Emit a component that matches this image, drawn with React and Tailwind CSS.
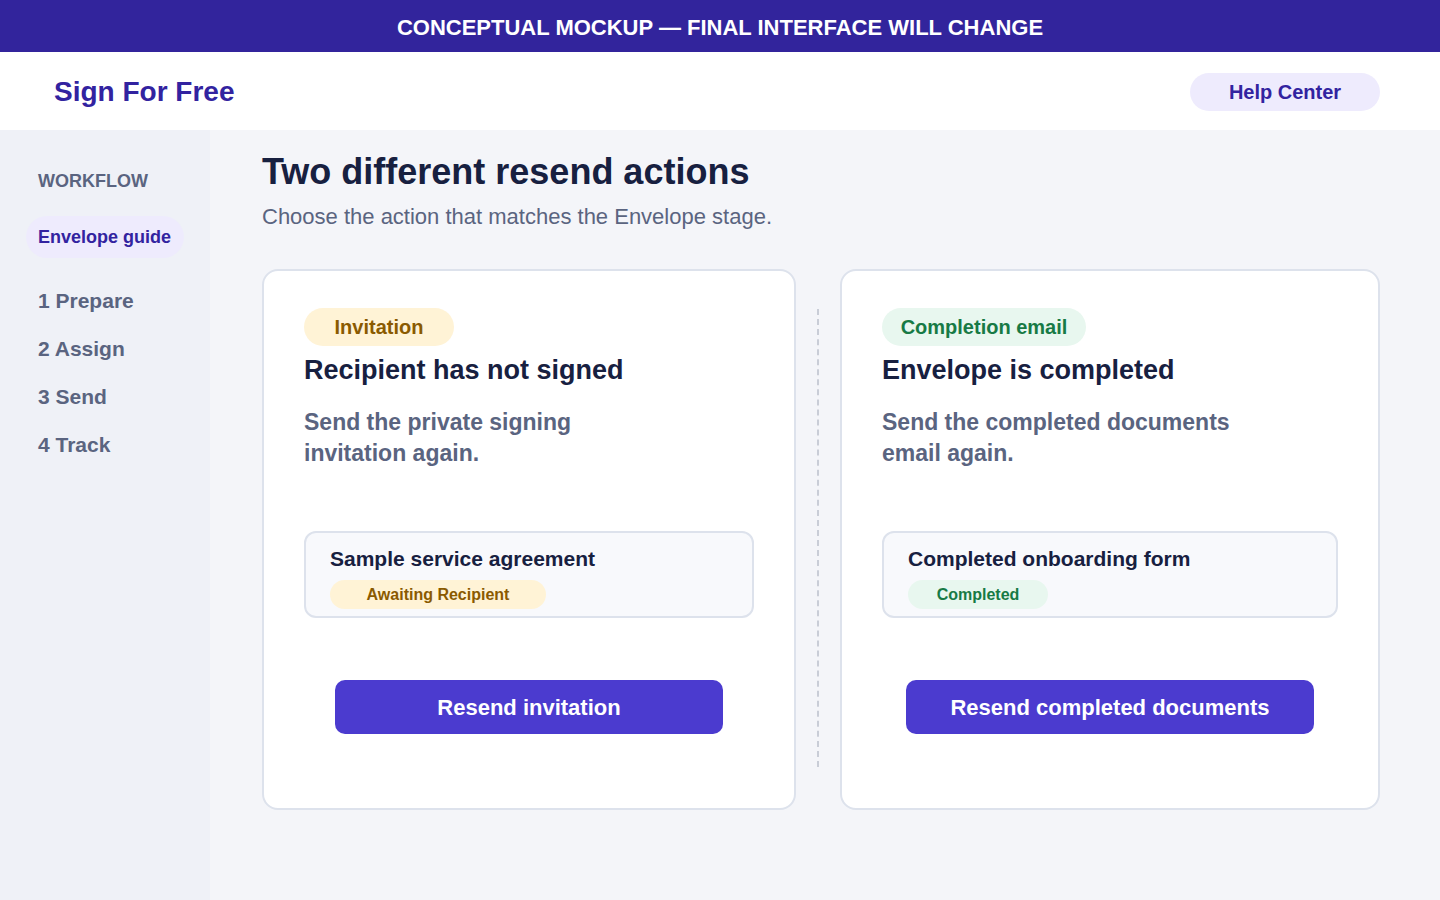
import React from "react";

const steps = ["1 Prepare", "2 Assign", "3 Send", "4 Track"];

const actions = [
  {
    badge: "Invitation",
    badgeCls: "w-[150px] bg-[#fff3d6] text-[#8a5a00]",
    title: "Recipient has not signed",
    desc: "Send the private signing invitation again.",
    doc: "Sample service agreement",
    status: "Awaiting Recipient",
    statusCls: "w-[216px] bg-[#fff3d6] text-[#8a5a00]",
    button: "Resend invitation",
    buttonCls: "w-[388px]",
    cardCls: "w-[534px]",
  },
  {
    badge: "Completion email",
    badgeCls: "w-[204px] bg-[#e8f7ef] text-[#177a45]",
    title: "Envelope is completed",
    desc: "Send the completed documents email again.",
    doc: "Completed onboarding form",
    status: "Completed",
    statusCls: "w-[140px] bg-[#e8f7ef] text-[#177a45]",
    button: "Resend completed documents",
    buttonCls: "w-[408px]",
    cardCls: "w-[540px]",
  },
];

const ActionCard = ({ a }) => {
  return (
    <div
      className={`${a.cardCls} h-[541px] shrink-0 rounded-2xl border-2 border-[#dde2ec] bg-white px-[40px] pt-[37px] flex flex-col`}
    >
      <span
        className={`${a.badgeCls} h-[38px] rounded-full flex items-center justify-center text-[20px] font-bold`}
      >
        {a.badge}
      </span>
      <h2 className="mt-[8px] text-[27px] leading-[32px] font-bold text-[#172040]">
        {a.title}
      </h2>
      <p className="mt-[21px] max-w-[355px] text-[23px] leading-[31px] font-bold text-[#5a6480]">
        {a.desc}
      </p>
      <div className="mt-[62px] h-[87px] rounded-xl border-2 border-[#dde2ec] bg-[#f8f9fc] px-[24px] pt-[14px]">
        <div className="text-[21px] leading-[24px] font-bold text-[#172040]">
          {a.doc}
        </div>
        <span
          className={`${a.statusCls} mt-[9px] h-[29px] rounded-full flex items-center justify-center text-[16px] font-bold`}
        >
          {a.status}
        </span>
      </div>
      <button
        className={`${a.buttonCls} mx-auto mt-[62px] h-[54px] rounded-[10px] bg-[#4b3bcf] text-white text-[22px] font-bold`}
      >
        {a.button}
      </button>
    </div>
  );
};

const App = () => {
  return (
    <div className="h-screen flex flex-col font-['Liberation_Sans',Arial,sans-serif]">
      <div className="h-[52px] shrink-0 bg-[#32249c] flex items-center justify-center pt-[2px] text-white text-[22px] font-bold">
        CONCEPTUAL MOCKUP — FINAL INTERFACE WILL CHANGE
      </div>

      <header className="h-[78px] shrink-0 bg-white flex items-center justify-between pl-[54px] pr-[60px] pt-[2px]">
        <div className="text-[28px] font-bold text-[#3223a0]">Sign For Free</div>
        <button className="w-[190px] h-[38px] rounded-full bg-[#eeebfd] text-[20px] font-bold text-[#3223a0]">
          Help Center
        </button>
      </header>

      <div className="flex flex-1">
        <aside className="w-[210px] shrink-0 bg-[#eff1f7] px-[26px] pt-[41px]">
          <div className="pl-3 text-[18px] leading-[20px] font-bold text-[#5a6480]">
            WORKFLOW
          </div>
          <div className="mt-[25px] w-[158px] h-[42px] rounded-full bg-[#eeebfd] pl-3 flex items-center text-[18px] font-bold text-[#3223a0]">
            Envelope guide
          </div>
          <ul className="mt-[19px]">
            {steps.map((s) => (
              <li
                key={s}
                className="h-[48px] pl-3 flex items-center text-[21px] font-bold text-[#5a6480]"
              >
                {s}
              </li>
            ))}
          </ul>
        </aside>

        <main className="flex-1 bg-[#f4f5f9] pl-[52px] pt-[20px]">
          <h1 className="text-[36px] leading-[44px] font-bold text-[#172040]">
            Two different resend actions
          </h1>
          <p className="mt-[9px] text-[22px] leading-[28px] text-[#5a6480]">
            Choose the action that matches the Envelope stage.
          </p>

          <div className="mt-[38px] flex items-start gap-[21px]">
            <ActionCard a={actions[0]} />
            <div className="mt-[40px] h-[458px] border-l-2 border-dashed border-[#c9cdd7]" />
            <ActionCard a={actions[1]} />
          </div>
        </main>
      </div>
    </div>
  );
};

export default App;
